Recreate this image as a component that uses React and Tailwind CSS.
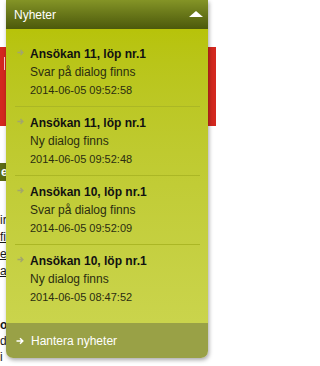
import React from "react";

const news = [
  { title: "Ansökan 11, löp nr.1", text: "Svar på dialog finns", date: "2014-06-05 09:52:58" },
  { title: "Ansökan 11, löp nr.1", text: "Ny dialog finns", date: "2014-06-05 09:52:48" },
  { title: "Ansökan 10, löp nr.1", text: "Svar på dialog finns", date: "2014-06-05 09:52:09" },
  { title: "Ansökan 10, löp nr.1", text: "Ny dialog finns", date: "2014-06-05 08:47:52" },
];

function Arrow({ className }) {
  return (
    <svg viewBox="0 0 8 8" className={className} fill="none" stroke="currentColor" strokeWidth="1.5">
      <path d="M0.5 4h6M4 1.2L6.8 4 4 6.8" />
    </svg>
  );
}

export default function App() {
  return (
    <div className="relative w-[216px] h-[366px] overflow-hidden bg-white font-['Liberation_Sans',Arial,sans-serif]">
      {/* page behind the menu */}
      <div className="flex flex-col">
        <div className="h-[47px]" />
        <div className="h-[79px] bg-[#d3281f] flex items-start">
          <div className="ml-[4px] mt-[10px] w-px h-[13px] bg-white/80" />
        </div>
        <div className="h-[37px]" />
        <div className="h-[18px] w-[40px] bg-[#5c6b13] text-white text-[12px] font-bold leading-[18px] pl-[1px]">
          er
        </div>
        <div className="flex flex-col mt-[31px] text-[12px] leading-[17px] text-[#1a1a1a]">
          <span>ir</span>
          <span className="underline">fil</span>
          <span className="underline">er</span>
          <span className="underline">ar</span>
        </div>
        <div className="flex flex-col mt-[37px] text-[12px] leading-[16px] text-[#1a1a1a]">
          <span className="font-bold">o</span>
          <span>d</span>
          <span>i</span>
        </div>
      </div>

      {/* news dropdown */}
      <div className="absolute left-[6px] top-0 w-[202px] rounded-b-[7px] shadow-[1px_2px_4px_rgba(0,0,0,0.35)] overflow-hidden">
        <div className="h-[29px] flex items-center justify-between pl-[8px] pr-[5px] bg-gradient-to-b from-[#849426] to-[#4c590b] text-white text-[12px]">
          <span>Nyheter</span>
          <svg viewBox="0 0 14 6" className="w-[14px] h-[6px] -mt-[1px]">
            <path d="M7 0L14 6H0z" fill="#fff" />
          </svg>
        </div>
        <div className="bg-gradient-to-b from-[#b7c309] to-[#cad44c] pt-[9px] pb-[10px]">
          {news.map((n, i) => (
            <div key={i}>
              {i > 0 && <div className="h-px bg-[#abb725] ml-[9px] mr-[8px]" />}
              <div className="relative pl-[24px] py-[7px]">
                <Arrow className="absolute left-[11px] top-[11px] w-[7px] h-[7px] text-[#a3a66c]" />
                <div className="text-[12px] font-bold leading-[18px] text-[#111]">{n.title}</div>
                <div className="text-[12px] leading-[18px] text-[#2b2d10]">{n.text}</div>
                <div className="text-[11px] leading-[18px] text-[#2b2d10]">{n.date}</div>
              </div>
            </div>
          ))}
        </div>
        <div className="h-[35px] bg-[#99a146] flex items-center gap-[7px] pl-[10px] text-white text-[12px]">
          <Arrow className="w-[8px] h-[8px] text-white" />
          <span>Hantera nyheter</span>
        </div>
      </div>
    </div>
  );
}
